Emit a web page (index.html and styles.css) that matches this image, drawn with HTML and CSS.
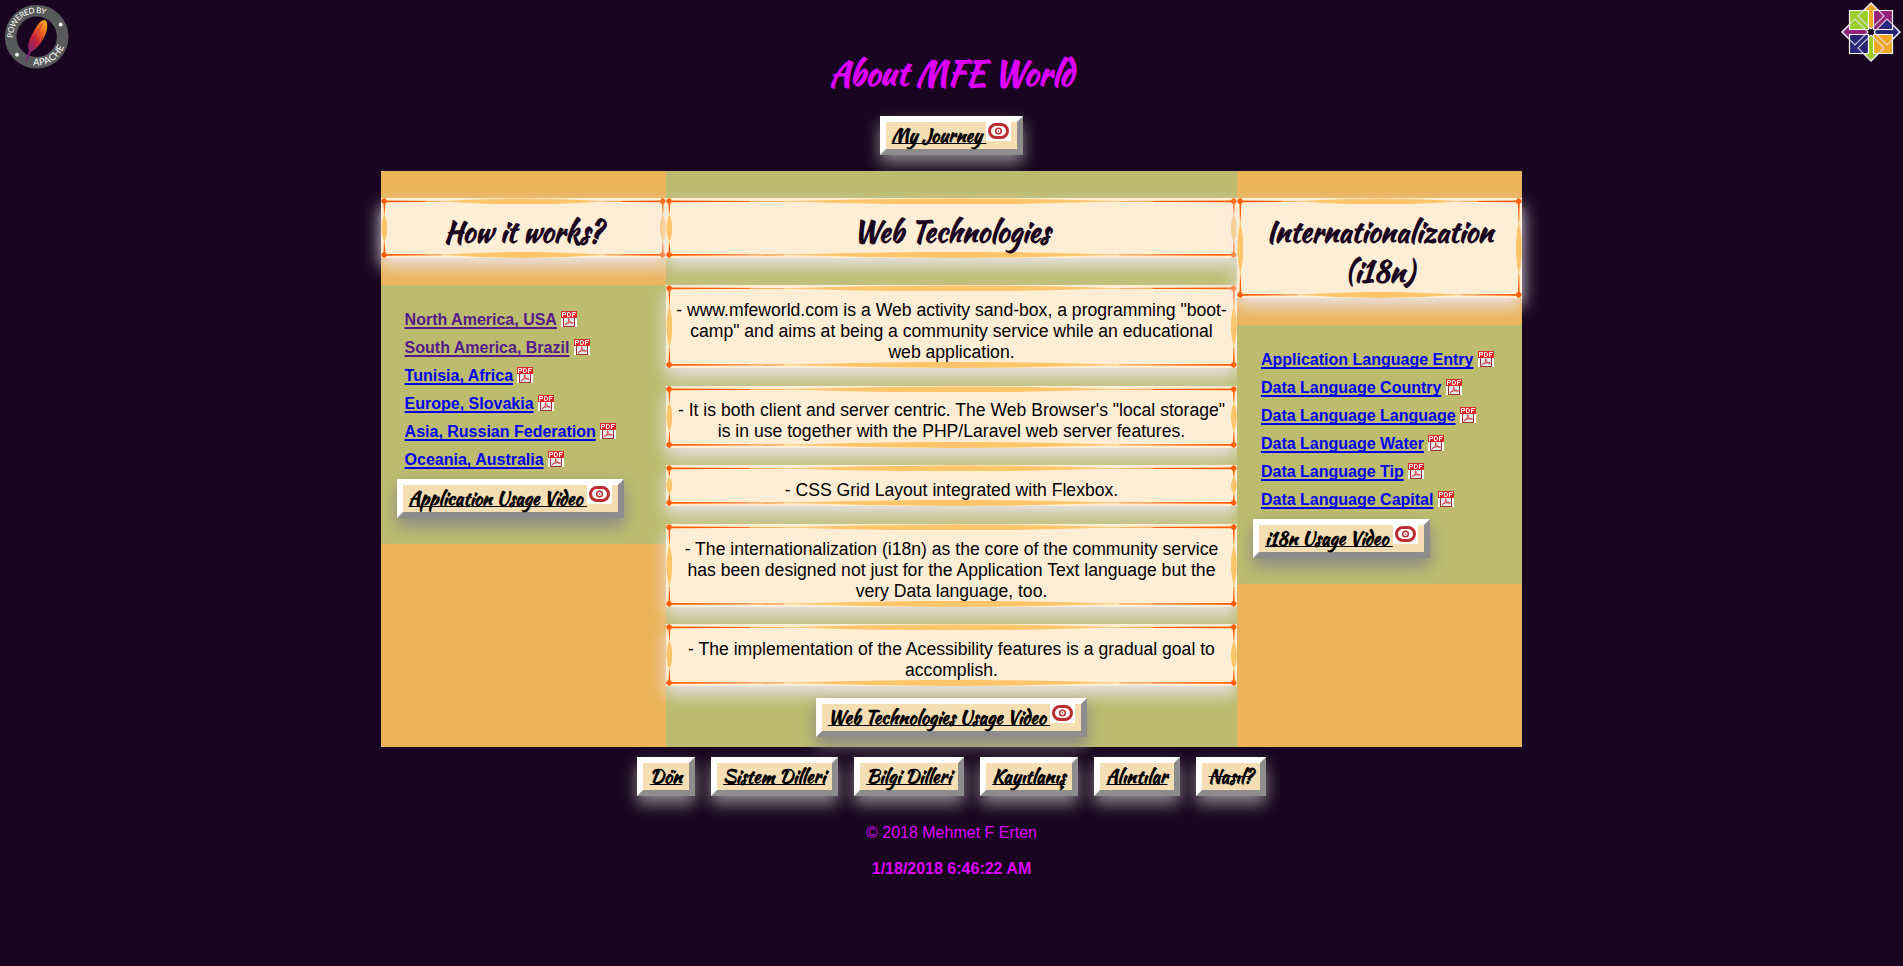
FILE: index.html
```html
<!DOCTYPE html>
<html lang="tr">
<head>
<meta charset="utf-8">
<title>About MFE World</title>
<link rel="stylesheet" href="styles.css">
</head>
<body>
<svg class="defs" width="0" height="0" aria-hidden="true">
  <symbol id="eye" viewBox="0 0 25 19">
    <rect width="25" height="19" fill="#fff"/>
    <rect x="3.500" y="2.500" width="18" height="13" rx="6.500" fill="#fff" stroke="#bd2c2f" stroke-width="3"/>
    <circle cx="12.500" cy="9" r="2.800" fill="#fff" stroke="#bd2c2f" stroke-width="1.500"/>
    <circle cx="12.500" cy="9" r=".7" fill="#bd2c2f"/>
  </symbol>
  <symbol id="pdf" viewBox="0 0 16 16">
    <rect width="16" height="16" fill="#fff"/>
    <rect x="2.500" y="6" width="11" height="9.500" fill="#e4e7ea" stroke="#a03034"/>
    <rect width="16" height="7" fill="#e0262b"/>
    <path d="M1.500 6V1.500H4.500V3.500H2M6.500 1.500V5.500H8L9.500 4.500V2.500L8 1.500H6.500M11.500 6V1.500H15M11.500 3.500H14" fill="none" stroke="#fff"/>
    <path d="M7.500 7.500C8 10.500 9.500 12 12.500 12.200M7.800 8C8 11 6 13 3.800 14M4.500 13C7 11.700 9 11.500 12 12" fill="none" stroke="#d83a3c" stroke-width="1"/>
  </symbol>
</svg>

<header class="header">
  <svg class="logo logo-apache" viewBox="0 0 75 75" role="img" aria-label="Powered by Apache">
    <defs>
      <linearGradient id="feather" x1="0.8" y1="0" x2="0.2" y2="1"><stop offset="0" stop-color="#f9a11b"/><stop offset=".25" stop-color="#ee6223"/><stop offset=".5" stop-color="#c8203c"/><stop offset=".9" stop-color="#6a2b80"/></linearGradient>
      <path id="arc-top" d="M13 36.500A23.500 23.500 0 0 1 60 36.500"/>
      <path id="arc-bottom" d="M33 65.200A29 29 0 0 0 66 36"/>
    </defs>
    <circle cx="36.700" cy="36.700" r="26" fill="none" stroke="#58595b" stroke-width="11.600"/>
    <path d="M44 20C49 20 48 32 43 39C40 45 37 48 31 52L26.500 62L25.600 61.500L29 51C27 46 29 39 34 31C37 25 40 21 44 20Z" fill="url(#feather)"/>
    <path d="M43 23Q35 36 26 61" fill="none" stroke="#9c2560" stroke-width=".6"/>
    <text class="ring-text" font-size="8" transform="rotate(-8 36.700 36.700)"><textPath href="#arc-top" startOffset="2" textLength="47">POWERED BY</textPath></text>
    <text class="ring-text" font-size="9.500"><textPath href="#arc-bottom" startOffset="0" textLength="39">APACHE</textPath></text>
    <circle cx="60.700" cy="24.500" r="1.900" fill="#fff"/><circle cx="17" cy="54.700" r="1.900" fill="#fff"/>
  </svg>
  <div class="header-main">
    <h1 class="title">About MFE World</h1>
    <a class="button" href="#"><span>My Journey </span><svg class="eye"><use href="#eye"/></svg></a>
  </div>
  <svg class="logo logo-centos" viewBox="0 0 68 68" role="img" aria-label="CentOS">
    <g stroke="#fff" stroke-width="1.200">
      <path d="M36 3L49 16 36 29 23 16Z" fill="#efa724"/>
      <path d="M65 32L52 45 39 32 52 19Z" fill="#262577"/>
      <path d="M36 61L49 48 36 35 23 48Z" fill="#9ccd2a"/>
      <path d="M7 32L20 19 33 32 20 45Z" fill="#932279"/>
      <path d="M14.500 10.500H33.500V29.500H14.500Z" fill="#9ccd2a"/>
      <path d="M38.500 10.500H57.500V29.500H38.500Z" fill="#932279"/>
      <path d="M14.500 34.500H33.500V53.500H14.500Z" fill="#262577"/>
      <path d="M38.500 34.500H57.500V53.500H38.500Z" fill="#efa724"/>
    </g>
    <path d="M34 12H38V28H34Z" fill="#efa724"/><path d="M34 36H38V52H34Z" fill="#9ccd2a"/>
    <path d="M15 30H32V34H15Z" fill="#932279"/><path d="M40 30H57V34H40Z" fill="#262577"/>
    <path d="M43 28.500L52 19.500 57 24V29Z" fill="#262577"/>
    <path d="M36 3L49 16 36 29 23 16ZM65 32L52 45 39 32 52 19ZM36 61L49 48 36 35 23 48ZM7 32L20 19 33 32 20 45Z" fill="none" stroke="#e9e3ee" stroke-width="1.200" stroke-opacity=".85"/>
    <path d="M36 29L39 32 36 35 33 32Z" fill="#19051f"/>
  </svg>
</header>

<main class="columns">
  <section class="column column-side">
    <h2 class="frame frame-heading">How it works?</h2>
    <div class="links">
      <ul>
        <li><a class="visited" href="#">North America, USA</a> <svg class="pdf"><use href="#pdf"/></svg></li>
        <li><a class="visited" href="#">South America, Brazil</a> <svg class="pdf"><use href="#pdf"/></svg></li>
        <li><a href="#">Tunisia, Africa</a> <svg class="pdf"><use href="#pdf"/></svg></li>
        <li><a href="#">Europe, Slovakia</a> <svg class="pdf"><use href="#pdf"/></svg></li>
        <li><a href="#">Asia, Russian Federation</a> <svg class="pdf"><use href="#pdf"/></svg></li>
        <li><a href="#">Oceania, Australia</a> <svg class="pdf"><use href="#pdf"/></svg></li>
      </ul>
      <a class="button" href="#"><span>Application Usage Video </span><svg class="eye"><use href="#eye"/></svg></a>
    </div>
  </section>

  <section class="column column-main">
    <h2 class="frame frame-heading">Web Technologies</h2>
    <p class="frame">- www.mfeworld.com is a Web activity sand-box, a programming "boot-camp" and aims at being a community service while an educational web application.</p>
    <p class="frame">- It is both client and server centric. The Web Browser's "local storage" is in use together with the PHP/Laravel web server features.</p>
    <p class="frame">- CSS Grid Layout integrated with Flexbox.</p>
    <p class="frame">- The internationalization (i18n) as the core of the community service has been designed not just for the Application Text language but the very Data language, too.</p>
    <p class="frame">- The implementation of the Acessibility features is a gradual goal to accomplish.</p>
    <a class="button" href="#"><span>Web Technologies Usage Video </span><svg class="eye"><use href="#eye"/></svg></a>
  </section>

  <section class="column column-side">
    <h2 class="frame frame-heading">Internationalization (i18n)</h2>
    <div class="links">
      <ul>
        <li><a href="#">Application Language Entry</a> <svg class="pdf"><use href="#pdf"/></svg></li>
        <li><a href="#">Data Language Country</a> <svg class="pdf"><use href="#pdf"/></svg></li>
        <li><a href="#">Data Language Language</a> <svg class="pdf"><use href="#pdf"/></svg></li>
        <li><a href="#">Data Language Water</a> <svg class="pdf"><use href="#pdf"/></svg></li>
        <li><a href="#">Data Language Tip</a> <svg class="pdf"><use href="#pdf"/></svg></li>
        <li><a href="#">Data Language Capital</a> <svg class="pdf"><use href="#pdf"/></svg></li>
      </ul>
      <a class="button" href="#"><span>i18n Usage Video </span><svg class="eye"><use href="#eye"/></svg></a>
    </div>
  </section>
</main>

<nav class="nav">
  <a class="button" href="#"><span>Dön</span></a>
  <a class="button" href="#"><span>Sistem Dilleri</span></a>
  <a class="button" href="#"><span>Bilgi Dilleri</span></a>
  <a class="button" href="#"><span>Kayıtlanış</span></a>
  <a class="button" href="#"><span>Alıntılar</span></a>
  <a class="button current" href="#"><span>Nasıl?</span></a>
</nav>

<footer class="footer">
  <p>© 2018 Mehmet F Erten</p>
  <p class="stamp">1/18/2018 6:46:22 AM</p>
</footer>
</body>
</html>
```
FILE: styles.css
```css
* { box-sizing: border-box; }
body {
  margin: 0;
  height: 966px;
  overflow: hidden;
  background: #19051f;
  font: 16px "Liberation Sans", Arial, sans-serif;
}
svg { display: block; flex: none; }
.defs { position: absolute; }

.header {
  display: flex;
  justify-content: space-between;
  height: 171px;
}
.logo-apache { width: 75px; height: 75px; }
.logo-centos { width: 68px; height: 68px; margin-left: 7px; }
.header-main {
  display: flex;
  flex-direction: column;
  align-items: center;
  padding-top: 46px;
}
.title {
  margin: 0 0 16px;
  color: #dd00ff;
  font: bold 33.300px/54px "Kaushan Script", Lato, sans-serif;
}
.ring-text { font-family: Lato, sans-serif; fill: #fff; }

.button {
  display: flex;
  width: max-content;
  padding: 0 6px;
  border: 6px solid;
  border-color: #fff #8d8d8d #8d8d8d #fff;
  background: #f5deb3;
  box-shadow: 0 8px 16px #888;
  color: #000;
  font: bold 18.400px/27px "Kaushan Script", Lato, sans-serif;
  text-decoration: none;
}
.button span {
  white-space: pre;
  text-decoration: underline;
  text-decoration-thickness: 1px;
  text-decoration-skip-ink: none;
}
.button.current span { text-decoration-line: line-through; }
.eye { width: 25px; height: 19px; }

.columns {
  display: grid;
  grid-template-columns: 1fr 2fr 1fr;
  width: 60%;
  height: 576px;
  margin: 0 auto;
}
.column { padding-top: 27px; }
.column-side { background: #ebb35a; }
.column-main {
  display: flex;
  flex-direction: column;
  align-items: center;
  background: #bcbb6e;
}

.frame {
  width: 100%;
  margin: 0 0 17.600px;
  padding: 9.750px 2px 0.250px;
  border: 5px solid transparent;
  border-image: url("data:image/svg+xml,%3Csvg xmlns='http://www.w3.org/2000/svg' width='112' height='112'%3E%3Cdefs%3E%3Cg id='c'%3E%3Cpath d='M3.300 0L5 1.300 6.300 3.300 5 5.300 3.300 6.500 1.300 5.300 0 3.300 1.300 1.300Z' fill='%23ff5f00'/%3E%3C/g%3E%3Cg id='h'%3E%3Cpath d='M6 2.500L26 3V3.800L6 4.200ZM106 2.500L86 3V3.800L106 4.200Z' fill='%23ff5f00'/%3E%3Cpath d='M20 3.300H92' stroke='%23ffc56b' stroke-width='.8'/%3E%3Cpath d='M26 3.300Q56 -2.500 86 3.300Q56 9.500 26 3.300Z' fill='%23ffc56b'/%3E%3C/g%3E%3C/defs%3E%3Cuse href='%23c'/%3E%3Cuse href='%23c' x='105.500'/%3E%3Cuse href='%23c' y='105.500'/%3E%3Cuse href='%23c' x='105.500' y='105.500'/%3E%3Cuse href='%23h'/%3E%3Cuse href='%23h' y='105.500'/%3E%3Cuse href='%23h' transform='matrix(0 1 1 0 0 0)'/%3E%3Cuse href='%23h' transform='matrix(0 1 1 0 105.500 0)'/%3E%3C/svg%3E") 6 / 6px stretch;
  background: #ffeed6;
  box-shadow: 0 8px 16px #e8e4ec;
  color: #000;
  font-size: 17.600px;
  line-height: 21px;
  text-align: center;
}
.frame-heading {
  margin-bottom: 27px;
  padding: 9px 0 1px;
  color: #19051f;
  font: bold 28.400px/40px "Kaushan Script", Lato, sans-serif;
}
.column-main .button { margin-top: -6.100px; }

.links {
  height: 259px;
  padding: 21px 16px 0;
  background: #bcbb6e;
}
.links ul {
  margin: 0 0 5px;
  padding: 0 0 0 8px;
  list-style: none;
}
.links li {
  display: flex;
  align-items: center;
  gap: 4.300px;
  height: 28px;
}
.links a:not(.button) {
  color: #0000ee;
  font-weight: bold;
  text-decoration-thickness: 2px;
  text-decoration-skip-ink: none;
  text-underline-offset: 2px;
}
.links a.visited { color: #551a8b; }
.pdf { width: 16px; height: 16px; margin-bottom: 2px; }

.nav {
  display: flex;
  justify-content: center;
  gap: 16px;
  margin-top: 10px;
}
.nav .button { padding: 0 6.500px; }
.footer {
  padding-top: 28px;
  color: #dd00ff;
  text-align: center;
}
.footer p {
  margin: 0 0 18px;
  line-height: 18px;
}
.footer .stamp { font-weight: bold; }
```
